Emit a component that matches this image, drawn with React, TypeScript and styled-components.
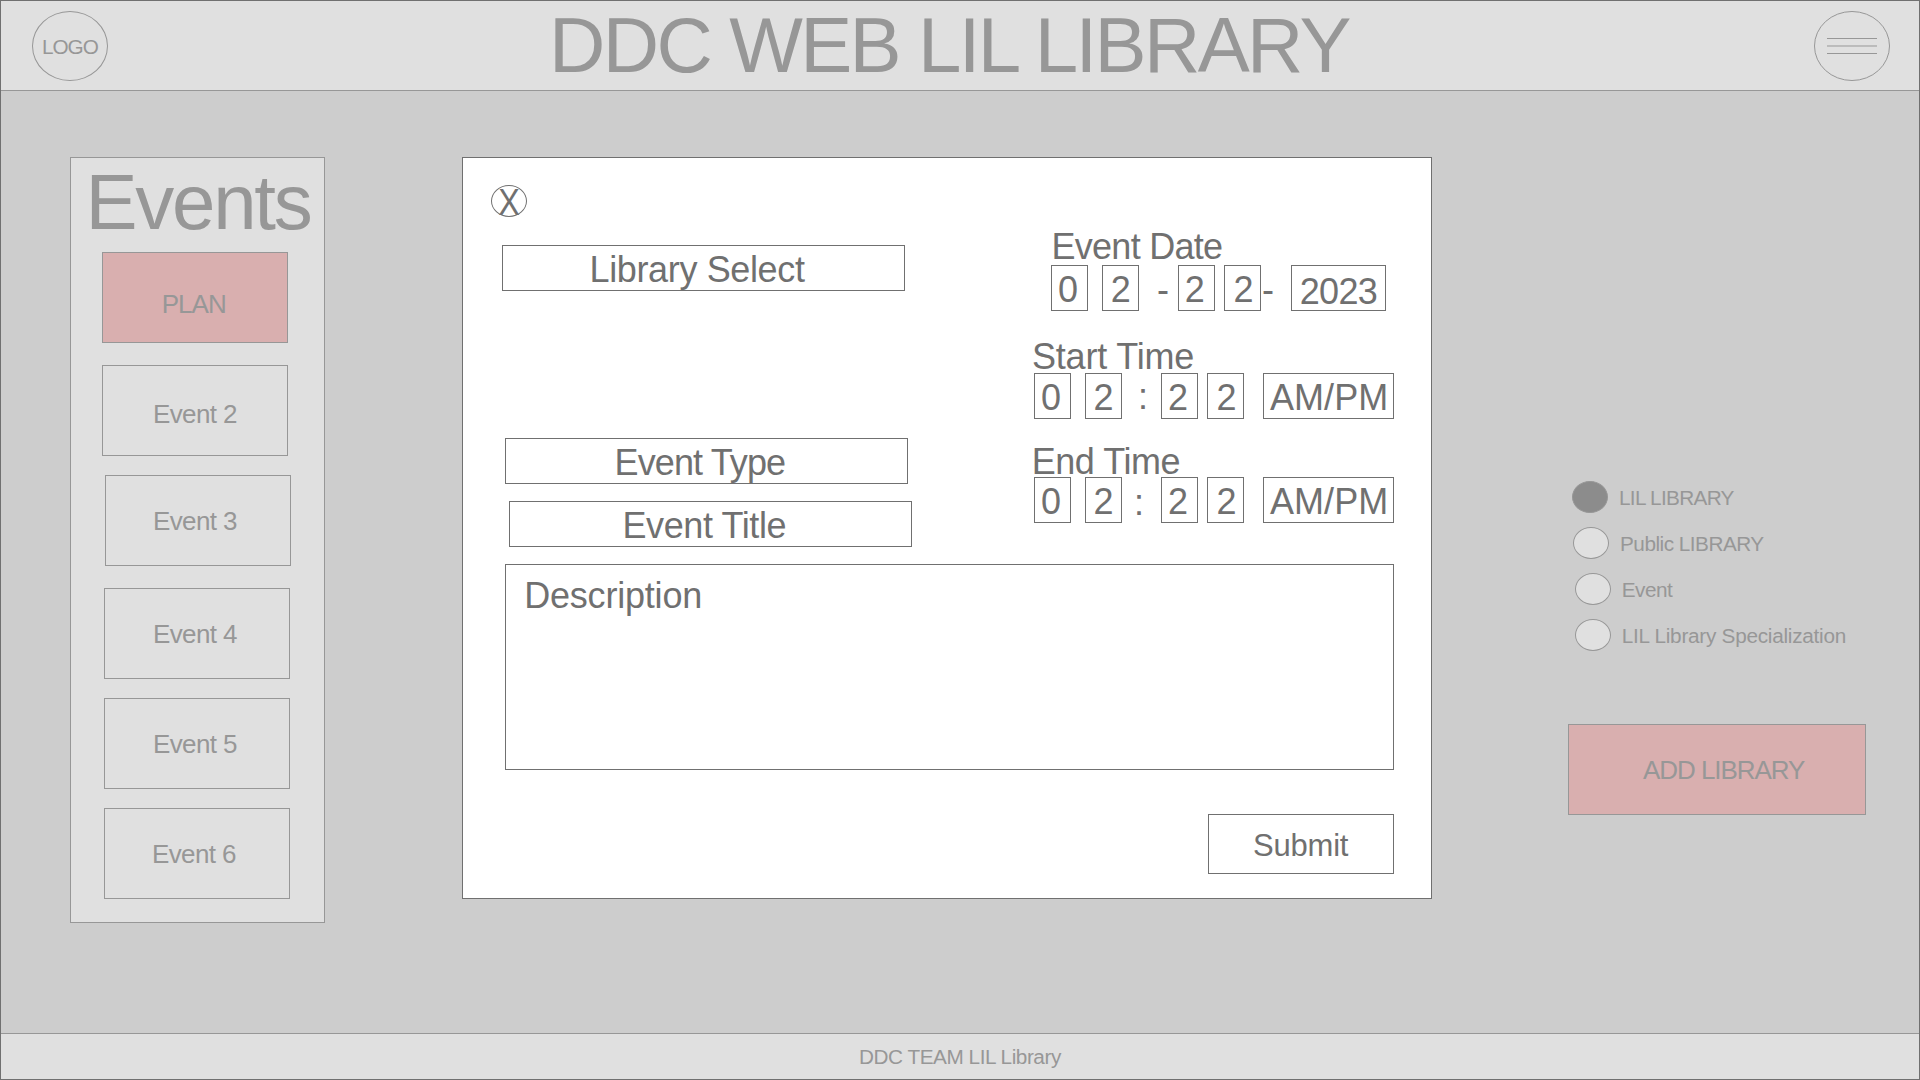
import React from "react";
import styled, { createGlobalStyle, css } from "styled-components";

const ink = "#707070";
const faded = "#979797";
const panel = "#e0e0e0";
const canvas = "#cdcdcd";
const rose = "#d9afaf";

const GlobalStyle = createGlobalStyle`
  *, *::before, *::after { box-sizing: border-box; }
  body { margin: 0; }
  button { font: inherit; color: inherit; padding: 0; text-align: left; border-radius: 0; }
`;

const Page = styled.div`
  display: flex;
  flex-direction: column;
  width: 1920px;
  height: 1080px;
  overflow: hidden;
  border: 1px solid ${ink};
  background: ${canvas};
  color: ${faded};
  font-family: "Liberation Sans", Arial, Helvetica, sans-serif;
  white-space: nowrap;
`;

type TextProps = { $track?: number; $x?: number; $y?: number };

const placed = css<TextProps>`
  display: block;
  letter-spacing: ${(p) => p.$track ?? 0}px;
  padding-left: ${(p) => p.$x ?? 0}px;
  padding-top: ${(p) => p.$y ?? 0}px;
`;

const SmallText = styled.span<TextProps>`
  ${placed}
  font-size: 20.75px;
  line-height: 23px;
`;

const ButtonText = styled.span<TextProps>`
  ${placed}
  font-size: 26px;
  line-height: 30px;
`;

const SubmitText = styled.span<TextProps>`
  ${placed}
  font-size: 31px;
  line-height: 35px;
`;

const FieldText = styled.span<TextProps>`
  ${placed}
  font-size: 36px;
  line-height: 43px;
`;

const Header = styled.header`
  display: flex;
  flex: none;
  height: 90px;
  padding: 0 29px 0 31px;
  border-bottom: 1px solid ${faded};
  background: ${panel};
`;

const Logo = styled.div`
  width: 76px;
  height: 70px;
  margin-top: 10px;
  border: 1px solid ${faded};
  border-radius: 50%;
`;

const SiteTitle = styled.h1`
  flex: 1;
  margin: 0;
  padding-left: 441px;
  font-size: 78px;
  font-weight: 400;
  line-height: 88px;
  letter-spacing: -2.62px;
`;

const MenuButton = styled.button`
  width: 76px;
  height: 70px;
  margin-top: 10px;
  border: none;
  background: none;
  svg { display: block; }
`;

const Main = styled.main`
  display: flex;
  flex: 1;
  align-items: flex-start;
  padding: 66px 0 0 69px;
`;

const Sidebar = styled.aside`
  width: 255px;
  height: 766px;
  border: 1px solid ${faded};
  background: ${panel};
`;

const SidebarTitle = styled.h2`
  margin: 0;
  padding-left: 14.5px;
  font-size: 78px;
  font-weight: 400;
  line-height: 88px;
  letter-spacing: -2.25px;
`;

const EventButton = styled.button<{ $gap: number; $indent: number; $accent?: boolean }>`
  display: flex;
  align-items: flex-start;
  width: 186px;
  height: 91px;
  margin: ${(p) => p.$gap}px 0 0 ${(p) => p.$indent}px;
  border: 1px solid ${faded};
  background: ${(p) => (p.$accent ? rose : panel)};
`;

const Dialog = styled.section`
  display: flex;
  flex-direction: column;
  width: 970px;
  height: 742px;
  margin-left: 137px;
  border: 1px solid ${ink};
  background: #fff;
  color: ${ink};
`;

const CloseButton = styled.button`
  display: flex;
  align-items: center;
  justify-content: center;
  width: 36px;
  height: 32px;
  margin: 27px 0 0 28px;
  border: 1px solid ${ink};
  border-radius: 50%;
  background: none;
`;

const CloseMark = styled.span`
  padding-top: 2px;
  font-size: 36px;
  line-height: 41px;
  transform: scaleX(0.9);
`;

const Fields = styled.div`
  display: flex;
  height: 347px;
`;

const LeftFields = styled.div`
  width: 567px;
  padding-top: 28px;
`;

const Field = styled.div<{ $gap?: number; $indent: number }>`
  width: 403px;
  height: 46px;
  margin: ${(p) => p.$gap ?? 0}px 0 0 ${(p) => p.$indent}px;
  border: 1px solid ${ink};
`;

const Schedule = styled.div`
  flex: 1;
  padding-top: 8px;
`;

const ScheduleLabel = styled.div<{ $gap?: number; $height: number }>`
  height: ${(p) => p.$height}px;
  margin-top: ${(p) => p.$gap ?? 0}px;
`;

const CellRow = styled.div<{ $indent: number }>`
  display: flex;
  height: 46px;
  margin-left: ${(p) => p.$indent}px;
`;

const Cell = styled.div<{ $width?: number; $gap?: number }>`
  flex: none;
  width: ${(p) => p.$width ?? 37}px;
  margin-left: ${(p) => p.$gap ?? 0}px;
  border: 1px solid ${ink};
`;

const Separator = styled.div<{ $width: number; $gap: number }>`
  flex: none;
  width: ${(p) => p.$width}px;
  margin-left: ${(p) => p.$gap}px;
`;

const Description = styled.div`
  width: 889px;
  height: 206px;
  margin-left: 42px;
  border: 1px solid ${ink};
`;

const SubmitButton = styled.button`
  display: flex;
  align-items: flex-start;
  width: 186px;
  height: 60px;
  margin: 44px 0 0 745px;
  border: 1px solid ${ink};
  background: none;
`;

const Aside = styled.aside`
  width: 298px;
  margin-left: 136px;
  padding-top: 324px;
`;

const Legend = styled.div`
  display: flex;
  flex-direction: column;
  gap: 14px;
`;

const LegendRow = styled.div<{ $indent: number }>`
  display: flex;
  height: 32px;
  margin-left: ${(p) => p.$indent}px;
`;

const Dot = styled.span<{ $filled?: boolean }>`
  flex: none;
  width: 36px;
  height: 32px;
  border: 1px solid ${faded};
  border-radius: 50%;
  background: ${(p) => (p.$filled ? "#8c8c8c" : panel)};
`;

const AddButton = styled.button`
  display: flex;
  align-items: flex-start;
  width: 298px;
  height: 91px;
  margin-top: 73px;
  border: 1px solid ${faded};
  background: ${rose};
`;

const Footer = styled.footer`
  flex: none;
  height: 46px;
  border-top: 1px solid ${faded};
  background: ${panel};
`;

const events = [
  { name: "PLAN", gap: 6, indent: 31, x: 58.7, y: 36, track: -0.98, accent: true },
  { name: "Event 2", gap: 22, indent: 31, x: 50, y: 33, track: -0.62 },
  { name: "Event 3", gap: 19, indent: 34, x: 47, y: 30, track: -0.62 },
  { name: "Event 4", gap: 22, indent: 33, x: 48, y: 30, track: -0.62 },
  { name: "Event 5", gap: 19, indent: 33, x: 48, y: 30, track: -0.62 },
  { name: "Event 6", gap: 19, indent: 33, x: 47, y: 30, track: -0.62 },
];

const legend = [
  { name: "LIL LIBRARY", indent: 4, x: 11, track: -0.68, filled: true },
  { name: "Public LIBRARY", indent: 5, x: 11, track: -0.5 },
  { name: "Event", indent: 7, x: 10.7, track: -0.5 },
  { name: "LIL Library Specialization", indent: 7, x: 10.7, track: -0.26 },
];

function TimeRow({ before, after, drop }: { before: number; after: number; drop: number }) {
  return (
    <CellRow $indent={4}>
      <Cell><FieldText $x={6} $y={2}>0</FieldText></Cell>
      <Cell $gap={14}><FieldText $x={7.5} $y={2}>2</FieldText></Cell>
      <Separator $width={10} $gap={before}><FieldText $y={drop}>:</FieldText></Separator>
      <Cell $gap={after}><FieldText $x={6} $y={2}>2</FieldText></Cell>
      <Cell $gap={9}><FieldText $x={8.5} $y={2}>2</FieldText></Cell>
      <Cell $gap={19} $width={131}><FieldText $x={6} $y={2} $track={0.05}>AM/PM</FieldText></Cell>
    </CellRow>
  );
}

export default function App() {
  return (
    <>
      <GlobalStyle />
      <Page>
        <Header>
          <Logo><SmallText $x={8.9} $y={23} $track={-1}>LOGO</SmallText></Logo>
          <SiteTitle>DDC WEB LIL LIBRARY</SiteTitle>
          <MenuButton aria-label="Menu">
            <svg width="76" height="70" viewBox="0 0 76 70" fill="none" stroke={faded}>
              <ellipse cx="38" cy="35" rx="37.5" ry="34.5" />
              <path d="M13 27.5H63M13 35H63M13 42.5H63" />
            </svg>
          </MenuButton>
        </Header>

        <Main>
          <Sidebar>
            <SidebarTitle>Events</SidebarTitle>
            {events.map((e) => (
              <EventButton key={e.name} $gap={e.gap} $indent={e.indent} $accent={e.accent}>
                <ButtonText $x={e.x} $y={e.y} $track={e.track}>{e.name}</ButtonText>
              </EventButton>
            ))}
          </Sidebar>

          <Dialog role="dialog">
            <CloseButton><CloseMark>X</CloseMark></CloseButton>
            <Fields>
              <LeftFields>
                <Field $indent={39}><FieldText $x={86.5} $y={2} $track={-0.36}>Library Select</FieldText></Field>
                <Field $gap={147} $indent={42}><FieldText $x={108.5} $y={2} $track={-0.87}>Event Type</FieldText></Field>
                <Field $gap={17} $indent={46}><FieldText $x={112.5} $y={2} $track={-0.4}>Event Title</FieldText></Field>
              </LeftFields>
              <Schedule>
                <ScheduleLabel $height={40}><FieldText $x={21.5} $track={-0.72}>Event Date</FieldText></ScheduleLabel>
                <CellRow $indent={21}>
                  <Cell><FieldText $x={6} $y={2}>0</FieldText></Cell>
                  <Cell $gap={14}><FieldText $x={7.7} $y={2}>2</FieldText></Cell>
                  <Separator $width={12} $gap={18}><FieldText $y={3}>-</FieldText></Separator>
                  <Cell $gap={9}><FieldText $x={5.7} $y={2}>2</FieldText></Cell>
                  <Cell $gap={9}><FieldText $x={8.5} $y={2}>2</FieldText></Cell>
                  <Separator $width={12} $gap={1}><FieldText $y={3}>-</FieldText></Separator>
                  <Cell $gap={17} $width={95}><FieldText $x={7.7} $y={4} $track={-0.65}>2023</FieldText></Cell>
                </CellRow>
                <ScheduleLabel $gap={24} $height={38}><FieldText $x={2} $track={-0.2}>Start Time</FieldText></ScheduleLabel>
                <TimeRow before={16} after={13} drop={2} />
                <ScheduleLabel $gap={21} $height={37}><FieldText $x={1.7} $track={-0.45}>End Time</FieldText></ScheduleLabel>
                <TimeRow before={12} after={17} drop={4} />
              </Schedule>
            </Fields>
            <Description><FieldText $x={18.2} $y={9} $track={-0.2}>Description</FieldText></Description>
            <SubmitButton><SubmitText $x={44} $y={13} $track={-0.2}>Submit</SubmitText></SubmitButton>
          </Dialog>

          <Aside>
            <Legend>
              {legend.map((l) => (
                <LegendRow key={l.name} $indent={l.indent}>
                  <Dot $filled={l.filled} />
                  <SmallText $x={l.x} $y={5} $track={l.track}>{l.name}</SmallText>
                </LegendRow>
              ))}
            </Legend>
            <AddButton><ButtonText $x={74} $y={30} $track={-1.06}>ADD LIBRARY</ButtonText></AddButton>
          </Aside>
        </Main>

        <Footer><SmallText $x={858} $y={11} $track={-0.46}>DDC TEAM LIL Library</SmallText></Footer>
      </Page>
    </>
  );
}
